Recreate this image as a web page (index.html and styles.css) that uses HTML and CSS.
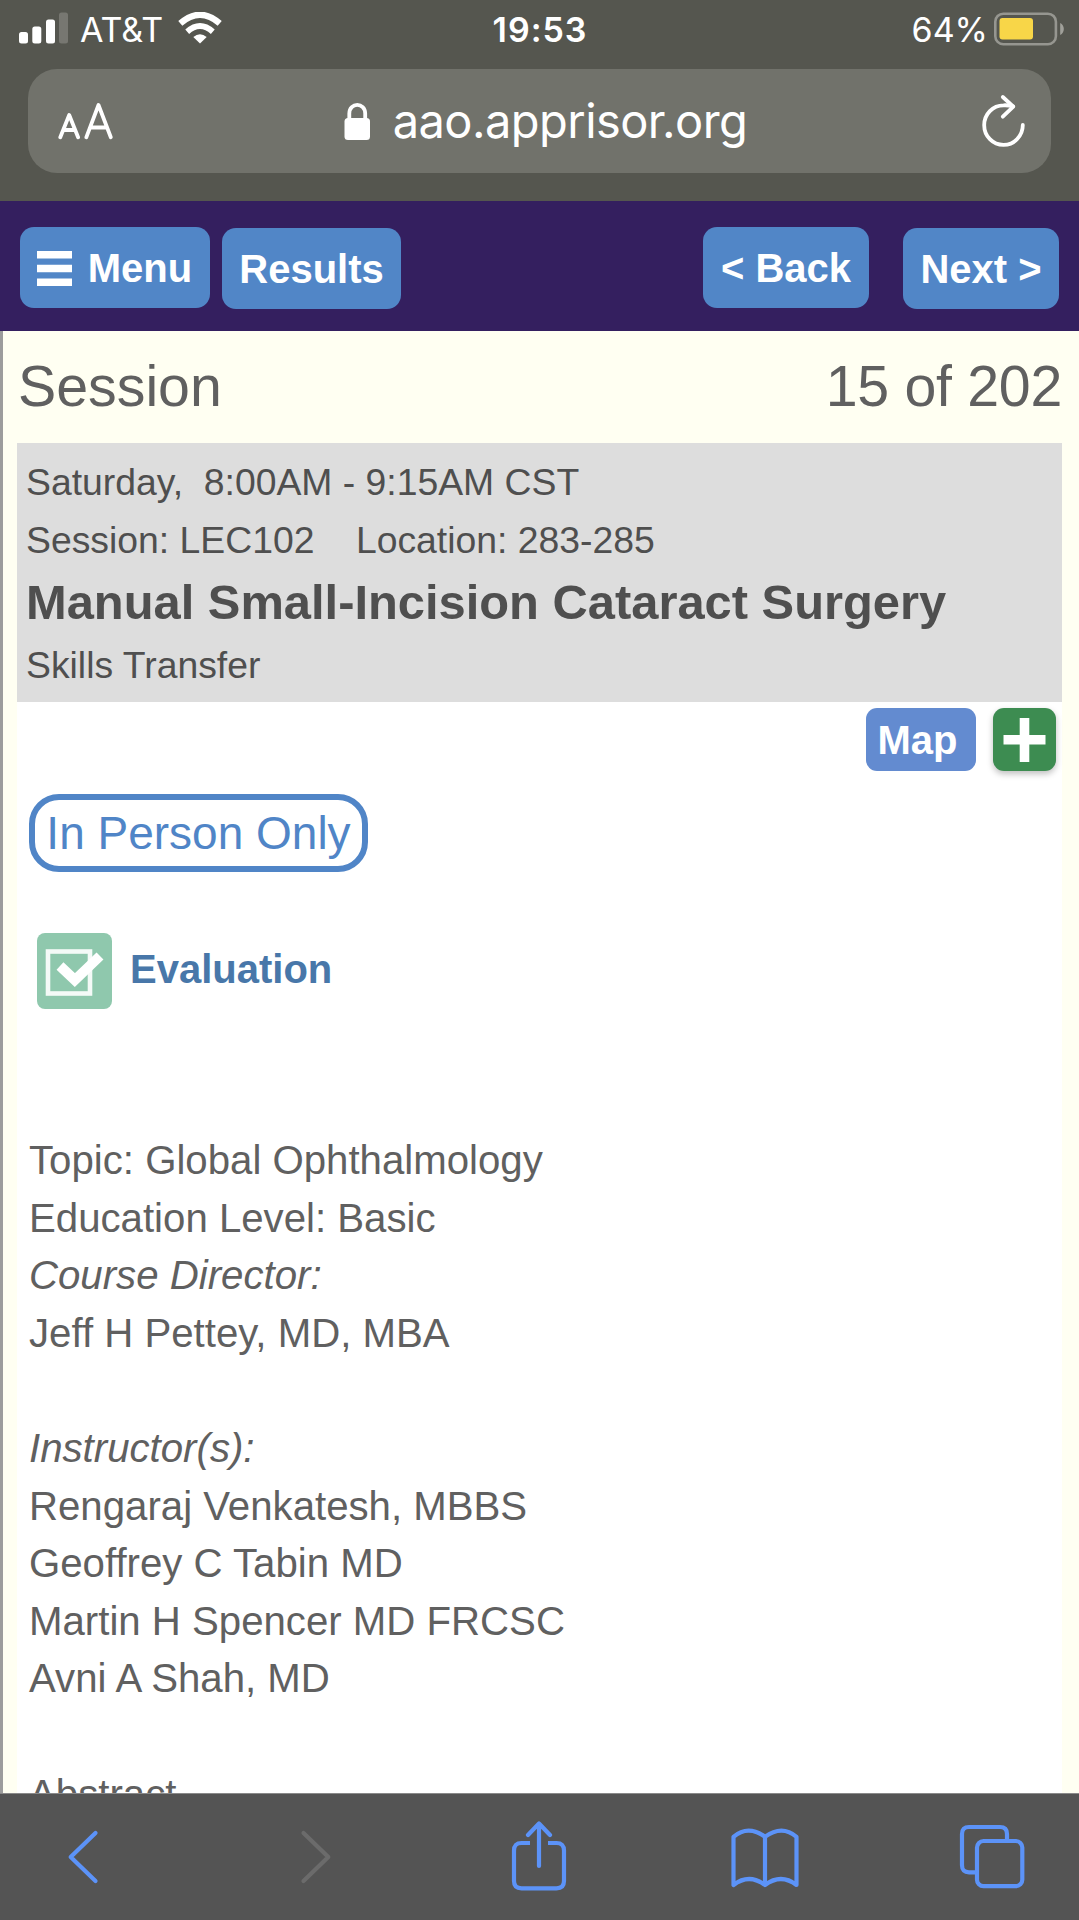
FILE: index.html
```
<!DOCTYPE html>
<html lang="en">
<head>
<meta charset="utf-8">
<title>Session</title>
<link rel="stylesheet" href="styles.css">
</head>
<body>
<div class="phone">
  <header class="chrome">
    <div class="status">
      <div class="status-left">
        <svg class="signal" width="50" height="32" viewBox="0 0 50 32" fill="#fff"><rect x="0" y="20" width="9" height="11.5" rx="2.5"/><rect x="13.3" y="14.5" width="9" height="17" rx="2.5"/><rect x="27" y="7.5" width="9" height="24" rx="2.5"/><rect x="40" y="0.5" width="9" height="31" rx="2.5" fill="#777771"/></svg>
        <span class="carrier">AT&amp;T</span>
        <svg class="wifi" width="44" height="32" viewBox="0 0 44 32" fill="none" stroke="#fff"><path d="M2.3 11.4Q22-5.8 41.7 11.4" stroke-width="6.2"/><path d="M9.2 19.7Q22 8.5 34.8 19.7" stroke-width="5.8"/><path d="M22 31.5L15.3 25Q22 19.5 28.7 25Z" fill="#fff" stroke="none"/></svg>
      </div>
      <span class="clock">19:53</span>
      <div class="status-right">
        <span class="percent">64%</span>
        <svg class="battery" width="71" height="34" viewBox="0 0 71 34"><rect x="1.3" y="1.7" width="60.6" height="30.5" rx="8" fill="none" stroke="#969690" stroke-width="2.6"/><rect x="5.5" y="6" width="33.5" height="21.5" rx="3" fill="#f8d648"/><path d="M66.2 11C71 13 71 21 66.2 23Z" fill="#a0a09a"/></svg>
      </div>
    </div>
    <div class="address">
      <svg class="text-size" width="57" height="38" viewBox="0 0 57 38" fill="none" stroke="#fff" stroke-width="3.8" stroke-linecap="round" stroke-linejoin="round"><path d="M2.3 35.3L11.2 13L20.1 35.3M5.3 28H17.1"/><path d="M28.3 35.3L40.5 3L52.8 35.3M32.3 25.5H48.8"/></svg>
      <div class="site">
        <svg width="27" height="39" viewBox="0 0 27 39"><rect x="0.5" y="16" width="25.5" height="22" rx="3.5" fill="#fff"/><path d="M5.3 18V11.5C5.3 0 21.2 0 21.2 11.5V18" fill="none" stroke="#fff" stroke-width="3.8"/></svg>
        <span class="domain">aao.apprisor.org</span>
      </div>
      <svg class="reload" width="44" height="54" viewBox="0 0 44 54" fill="none" stroke="#fff" stroke-width="3.8" stroke-linecap="round" stroke-linejoin="round"><path d="M40.8 31A19.3 19.8 0 1 1 21.5 11.3Q26 11 31 12.3"/><path d="M20.8 3L31.3 12.7L20.8 22.7"/></svg>
    </div>
  </header>

  <nav class="nav">
    <div class="nav-group">
      <a class="btn menu"><svg width="35" height="35" viewBox="0 0 35 35" fill="#fff"><path d="M0 0H35V7.5H0ZM0 13.8H35V21.3H0ZM0 27.6H35V35H0Z"/></svg>Menu</a>
      <a class="btn results">Results</a>
    </div>
    <div class="nav-group">
      <a class="btn back">&lt; Back</a>
      <a class="btn next">Next &gt;</a>
    </div>
  </nav>

  <main class="page">
    <div class="heading"><span>Session</span><span class="position">15 of 202</span></div>
    <article class="panel">
      <div class="summary">
        <div class="meta">Saturday,&nbsp; 8:00AM - 9:15AM CST</div>
        <div class="meta">Session: LEC102 &nbsp;&nbsp; Location: 283-285</div>
        <h1 class="title">Manual Small-Incision Cataract Surgery</h1>
        <div class="kind">Skills Transfer</div>
      </div>
      <div class="actions">
        <a class="map">Map</a>
        <a class="add"><svg width="44" height="46" viewBox="0 0 44 46"><path d="M21.5 1V45M0.5 22.8H42.5" stroke="#fff" stroke-width="9.6"/></svg></a>
      </div>
      <div class="pill">In Person Only</div>
      <div class="evaluation">
        <span class="check"><svg width="75" height="76" viewBox="0 0 75 76" fill="none" stroke="#fff"><rect x="11" y="18.5" width="42" height="42" stroke-width="4.6" opacity=".9"/><path d="M23 33L37.8 47L63 23" stroke-width="10"/></svg></span>
        <a class="evaluate">Evaluation</a>
      </div>
      <div class="details">
        <div>Topic: Global Ophthalmology</div>
        <div>Education Level: Basic</div>
        <div><em>Course Director:</em></div>
        <div>Jeff H Pettey, MD, MBA</div>
        <br>
        <div><em>Instructor(s):</em></div>
        <div>Rengaraj Venkatesh, MBBS</div>
        <div>Geoffrey C Tabin MD</div>
        <div>Martin H Spencer MD FRCSC</div>
        <div>Avni A Shah, MD</div>
        <br>
        <div>Abstract</div>
      </div>
    </article>
  </main>

  <footer class="toolbar">
    <svg width="34" height="56" viewBox="0 0 34 56"><path d="M29.5 4L4.7 28L29.5 52"/></svg>
    <svg class="forward" width="34" height="56" viewBox="0 0 34 56"><path d="M4.5 4L29.3 28L4.5 52"/></svg>
    <svg class="share" width="56" height="72" viewBox="0 0 56 72"><path stroke-linecap="butt" d="M19 22H10.5Q3 22 3 29.5V60Q3 67.3 10.5 67.3H45.5Q53 67.3 53 60V29.5Q53 22 45.5 22H37"/><path d="M28 45V3M17 14L28 2.5L39 14"/></svg>
    <svg class="bookmarks" width="70" height="62" viewBox="0 0 70 62"><path d="M3.5 10.8Q18-1.5 35 10.8Q52-1.5 66.5 10.8V59Q51 47 35 59Q19 47 3.5 59ZM35 10.8V59"/></svg>
    <svg class="tabs" width="68" height="68" viewBox="0 0 68 68"><path stroke-linecap="butt" d="M19 49.3H11Q4 49.3 4 42.3V11Q4 4 11 4H42Q49 4 49 11V18"/><rect x="19" y="18" width="45.3" height="45.2" rx="6.5"/></svg>
  </footer>
</div>
</body>
</html>
```
FILE: styles.css
```
* { box-sizing: border-box; }

body {
  margin: 0;
  font-family: "Liberation Sans", Arial, sans-serif;
}

svg { display: block; flex: none; }

.phone {
  display: flex;
  flex-direction: column;
  width: 1079px;
  height: 1920px;
  overflow: hidden;
}

/* Browser chrome */
.chrome {
  flex: none;
  height: 201px;
  background: #55564f;
  color: #fff;
  font-family: Inter, sans-serif;
}

.status {
  display: grid;
  grid-template-columns: 1fr auto 1fr;
  height: 69px;
  padding: 12px 14px 0 15px;
  line-height: 36px;
  font-size: 34px;
}

.status-left { display: flex; padding-left: 4px; }
.status-right { display: flex; justify-content: flex-end; }
.carrier { width: 109px; padding-left: 11px; }
.clock { font-weight: 600; letter-spacing: 1px; }
.battery { margin-left: 6px; }

.address {
  display: flex;
  align-items: center;
  justify-content: space-between;
  height: 104px;
  margin: 0 28px;
  padding: 0 25px 0 30px;
  border-radius: 29px;
  background: #71726b;
}

.site { display: flex; align-items: center; gap: 22px; margin-right: 6px; }
.domain { font-size: 47px; line-height: 60px; letter-spacing: -0.55px; }

/* Page navigation */
.nav {
  flex: none;
  display: flex;
  justify-content: space-between;
  height: 130px;
  padding: 26px 20px;
  background: #341f5f;
}

.nav-group { display: flex; }

.btn {
  display: flex;
  align-items: center;
  justify-content: center;
  height: 81px;
  padding-top: 2px;
  border-radius: 14px;
  background: #5186c7;
  color: #fff;
  font-size: 40px;
  font-weight: bold;
}

.menu { gap: 16px; width: 190px; padding-right: 1px; }
.results { width: 179px; margin: 1px 0 0 12px; }
.back { width: 166px; }
.next { width: 156px; margin: 1px 0 0 34px; }

/* Session page */
.page {
  flex: 1;
  min-height: 0;
  overflow: hidden;
  padding: 0 17px 0 14px;
  border-left: 3px solid #9c9c9c;
  background: #fffff2;
}

.heading {
  display: flex;
  justify-content: space-between;
  height: 112px;
  padding: 0 0 0 1px;
  color: #606060;
  font-size: 57.3px;
  line-height: 110px;
}

.position { letter-spacing: -0.3px; }

.panel {
  background: #fff;
  color: #606060;
}

.summary {
  height: 259px;
  padding: 11px 8px 0 9px;
  background: #ddd;
  color: #4f4f4f;
  font-size: 37.35px;
  line-height: 57.6px;
  white-space: nowrap;
}

.title {
  margin: 0;
  font-size: 48.85px;
  line-height: 67px;
}

.kind { line-height: 59.5px; }

.actions {
  display: flex;
  justify-content: flex-end;
  gap: 17px;
  padding: 6px 6px 0 0;
}

.map, .add {
  display: flex;
  align-items: center;
  justify-content: center;
  height: 63px;
  border-radius: 11px;
}

.map {
  width: 110px;
  padding: 2px 7px 0 0;
  background: #638bd0;
  color: #fff;
  font-size: 40px;
  font-weight: bold;
}

.add {
  width: 63px;
  background: #3d8c51;
  box-shadow: 0 3px 6px rgba(0, 0, 0, .25);
}

.pill {
  width: 339px;
  height: 78px;
  margin: 23px 0 0 12px;
  border: 6px solid #5085c7;
  border-radius: 30px;
  color: #5085c7;
  font-size: 46px;
  line-height: 66px;
  text-align: center;
  white-space: nowrap;
}

.evaluation {
  display: flex;
  gap: 18px;
  margin: 61px 0 0 20px;
}

.check { border-radius: 8px; background: #8fc8ad; }

.evaluate {
  color: #4877a9;
  font-size: 40px;
  font-weight: bold;
  line-height: 72px;
}

.details {
  padding: 123px 12px 0;
  font-size: 40.2px;
  line-height: 57.6px;
}

/* Bottom toolbar */
.toolbar {
  flex: none;
  display: flex;
  align-items: center;
  height: 127px;
  padding-left: 66px;
  border-top: 1px solid #8a8a8a;
  background: #545454;
}

.toolbar svg {
  fill: none;
  stroke: #5c93f8;
  stroke-width: 4.2;
  stroke-linecap: round;
  stroke-linejoin: round;
}

.toolbar .forward { margin-left: 199px; stroke: #6b6b6b; }
.share { margin-left: 178px; }
.bookmarks { margin-left: 163px; }
.tabs { margin-left: 158px; }
```
